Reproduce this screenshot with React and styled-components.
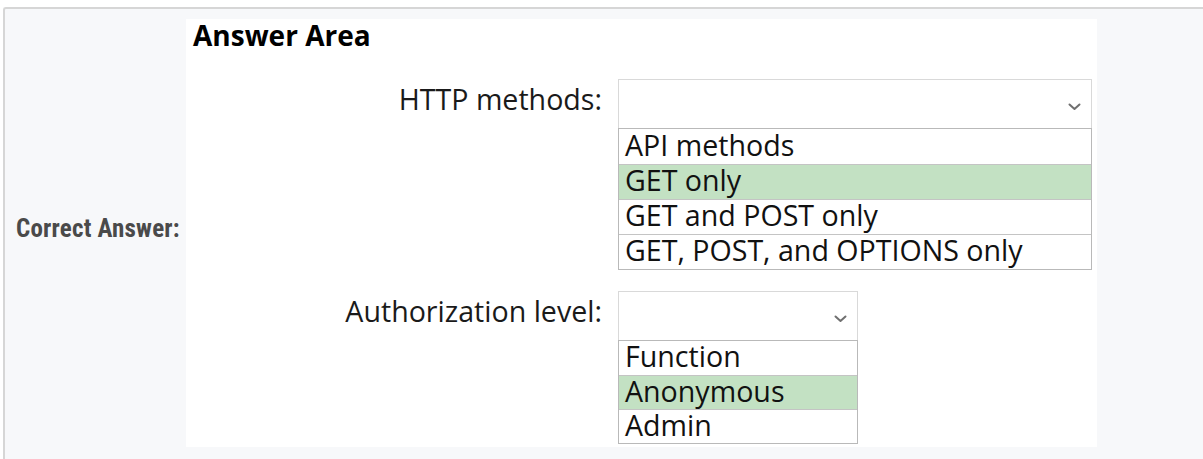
import React from "react";
import styled, { createGlobalStyle } from "styled-components";

const Global = createGlobalStyle`
  html, body { margin: 0; padding: 0; background: #ffffff; overflow: hidden; }
  body { width: 1203px; height: 459px; }
`;

const Panel = styled.div`
  margin: 7px 0 0 3px;
  width: 1230px;
  height: 470px;
  box-sizing: border-box;
  background: #f7f8fa;
  border-top: 2px solid #d6d6d6;
  border-left: 2px solid #d6d6d6;
  border-top-left-radius: 3px;
  display: flex;
  flex-direction: column;
`;

const Row = styled.div`
  display: flex;
  align-items: stretch;
`;

const Side = styled.div`
  width: 181px;
  flex: none;
  display: flex;
  align-items: center;
  padding-left: 11px;
  box-sizing: border-box;
`;

const SideLabel = styled.span`
  font-family: "Roboto Condensed", Roboto, sans-serif;
  font-weight: 700;
  font-size: 25px;
  letter-spacing: 0.2px;
  color: #4a4a4a;
  white-space: nowrap;
`;

const Figure = styled.div`
  margin-top: 10px;
  width: 911px;
  height: 428px;
  background: #ffffff;
  box-sizing: border-box;
  padding: 0 0 0 7px;
  font-family: "Open Sans", "Noto Sans", sans-serif;
  color: #1a1a1a;
`;

const Title = styled.div`
  font-weight: 700;
  font-size: 28px;
  line-height: 32px;
  color: #000;
`;

const Form = styled.div`
  display: grid;
  grid-template-columns: 409px auto;
  column-gap: 16px;
  row-gap: 21px;
  margin-top: 28px;
  align-items: start;
`;

const Label = styled.div`
  height: 49px;
  box-sizing: border-box;
  padding-bottom: 9px;
  display: flex;
  align-items: center;
  justify-content: flex-end;
  font-size: 28.6px;
  line-height: 1;
  color: #1a1a1a;
  white-space: nowrap;
`;

const Dropdown = styled.div`
  width: ${(p) => p.$w}px;
  display: flex;
  flex-direction: column;
`;

const SelectBox = styled.div`
  height: 49px;
  box-sizing: border-box;
  border: 1px solid #d9d9d9;
  border-bottom: none;
  background: #fff;
  display: flex;
  align-items: center;
  justify-content: flex-end;
  padding: 6px 10px 0 0;
`;

const OptionList = styled.div`
  border: 1px solid #b9b9b9;
  display: flex;
  flex-direction: column;
`;

const Option = styled.div`
  height: ${(p) => p.$h}px;
  box-sizing: border-box;
  display: flex;
  align-items: center;
  padding: 0 0 3px 6px;
  font-size: 28.6px;
  line-height: 1;
  color: #111;
  white-space: nowrap;
  background: ${(p) => (p.$correct ? "#c3e1c3" : "#ffffff")};
  & + & {
    border-top: 1px solid #c4c4c4;
  }
`;

const Footer = styled.div`
  margin: 10px 0 0 14px;
  font-family: Roboto, sans-serif;
  font-size: 17px;
  line-height: 20px;
  color: #9a9a9a;
`;

const Chevron = () => (
  <svg width="13" height="8" viewBox="0 0 13 8">
    <path d="M1.5 1.5 L6.5 6 L11.5 1.5" fill="none" stroke="#707070" strokeWidth="2" strokeLinecap="round" strokeLinejoin="round" />
  </svg>
);

const Select = ({ width, rowHeight, options, correct }) => (
  <Dropdown $w={width}>
    <SelectBox>
      <Chevron />
    </SelectBox>
    <OptionList>
      {options.map((o) => (
        <Option key={o} $h={rowHeight} $correct={o === correct}>
          {o}
        </Option>
      ))}
    </OptionList>
  </Dropdown>
);

export default function App() {
  return (
    <>
      <Global />
      <Panel>
        <Row>
          <Side>
            <SideLabel>Correct Answer:</SideLabel>
          </Side>
          <Figure>
            <Title>Answer Area</Title>
            <Form>
              <Label>HTTP methods:</Label>
              <Select
                width={474}
                rowHeight={35}
                correct="GET only"
                options={["API methods", "GET only", "GET and POST only", "GET, POST, and OPTIONS only"]}
              />
              <Label>Authorization level:</Label>
              <Select width={240} rowHeight={34} correct="Anonymous" options={["Function", "Anonymous", "Admin"]} />
            </Form>
          </Figure>
        </Row>
        <Footer>Box 1: GET only</Footer>
      </Panel>
    </>
  );
}
